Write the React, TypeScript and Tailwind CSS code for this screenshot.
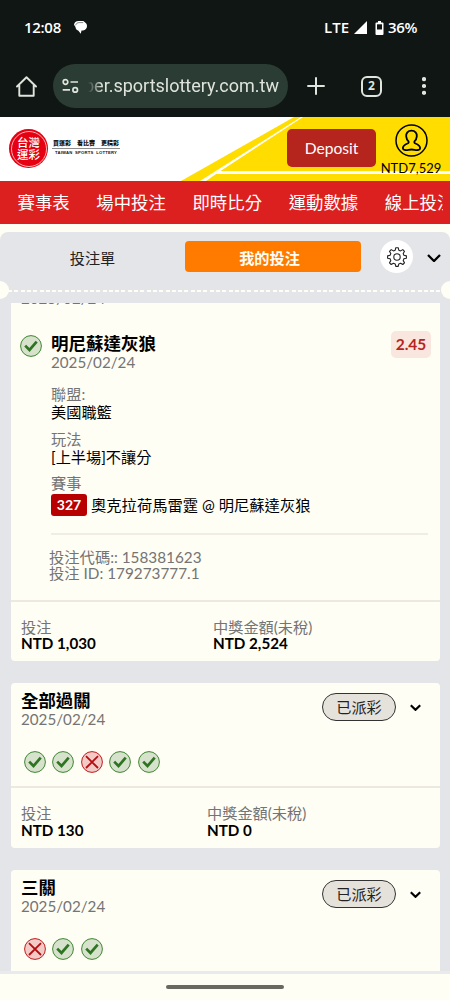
import { ReactNode } from "react";

const navItems = ["賽事表", "場中投注", "即時比分", "運動數據", "線上投注"];

function ResultIcon({ won }: { won: boolean }) {
  return (
    <svg
      className="block h-[22px] w-[22px] shrink-0"
      viewBox="0 0 22 22"
      fill="none"
    >
      <circle
        cx="11"
        cy="11"
        r="10.4"
        fill={won ? "#d6e2cc" : "#f3cbc6"}
        stroke={won ? "#3f8534" : "#bf1a1f"}
      />
      {won ? (
        <path d="M5.2 10.6 9.5 15 16.7 6.7" stroke="#2f7423" strokeWidth="2.7" />
      ) : (
        <path d="M5 5.2 17 17M17 5.2 5 17" stroke="#b80d10" strokeWidth="1.8" />
      )}
    </svg>
  );
}

function Chevron({ big }: { big?: boolean }) {
  return (
    <svg
      className={big ? "h-2 w-[14px]" : "h-[7px] w-[11px]"}
      viewBox="0 0 14 8"
      fill="none"
      stroke="#000"
      strokeWidth={big ? 2.3 : 2.7}
    >
      <path d="M1 1 7 7 13 1" />
    </svg>
  );
}

function StatusBar() {
  return (
    <div className="flex h-[55px] items-center pl-6 pr-8 font-['Open_Sans'] text-[15px] font-semibold text-white">
      <span className="w-[38px] whitespace-nowrap tracking-[-0.3px]">12:08</span>
      <svg className="ml-3 h-[13px] w-[13px]" viewBox="0 0 13 13" fill="#fff">
        <path d="M4.5 0h3.6c1.4 0 2.1.5 2.7 1.2C12.2 1.9 13 3.3 13 5c0 2.4-1.6 4.2-4 4.5H7.5L6.8 12.7 4.2 9.5C2.3 9 1.5 7.4 1.5 6L0 3.8C.2 1.5 2 0 4.5 0Z" />
        <path d="M1.7 4.3C2.2 2.4 3.3 1.6 5.2 1.6h4" fill="none" stroke="#101613" strokeWidth=".5" />
      </svg>
      <span className="ml-auto w-[26px] whitespace-nowrap text-[15px]">LTE</span>
      <svg className="ml-1 h-[13px] w-[13px]" viewBox="0 0 13 13" fill="#fff">
        <path d="M13 0v13H0Z" />
      </svg>
      <svg className="ml-2 h-[14px] w-[9px]" viewBox="0 0 9 14">
        <path
          d="M3 0h3v1.5h1.5Q8.5 1.5 8.5 2.5v10.5q0 1-1 1h-6q-1 0-1-1V2.5q0-1 1-1H3Z"
          fill="#fff"
        />
        <path d="M2 3.3h5v5.2H2Z" fill="#101613" />
      </svg>
      <span className="ml-[4px] w-[30px] whitespace-nowrap tracking-[-0.3px]">36%</span>
    </div>
  );
}

function BrowserBar() {
  return (
    <div className="flex h-[62px] items-start pt-[9px] text-[#dfe4dd]">
      <div className="flex h-11 w-[53px] items-center pl-4">
        <svg
          className="h-[21px] w-[21px]"
          viewBox="0 0 21 21"
          fill="none"
          stroke="currentColor"
          strokeWidth="1.9"
          strokeLinejoin="round"
          strokeLinecap="round"
        >
          <path d="M1 10.5 10.5 1.3 20 10.5M3.3 9v10.8h14.4V9" />
        </svg>
      </div>
      <div className="flex h-11 w-[235px] items-center rounded-full bg-[#2a3c33] pl-[9px]">
        <svg
          className="h-4 w-[17px] shrink-0"
          viewBox="0 0 17 16"
          fill="none"
          stroke="currentColor"
          strokeWidth="1.7"
        >
          <circle cx="3.5" cy="4" r="2.3" />
          <path d="M8.5 4H16M.7 11.9H8" />
          <circle cx="13.2" cy="11.9" r="2.3" />
        </svg>
        <span className="ml-[9px] flex h-8 w-[191px] items-center justify-end overflow-hidden whitespace-nowrap [mask-image:linear-gradient(to_right,transparent,black_14px)] font-['Roboto'] text-[18px] leading-8">
          ber.sportslottery.com.tw
        </span>
      </div>
      <div className="flex h-11 flex-1 items-center">
        <svg
          className="ml-[19px] h-[18px] w-[18px]"
          viewBox="0 0 18 18"
          fill="none"
          stroke="currentColor"
          strokeWidth="2"
        >
          <path d="M9 .3v17.4M.3 9h17.4" />
        </svg>
        <span className="ml-9 flex h-[21px] w-[21px] items-center justify-center rounded-[6px] border-2 border-current font-['Open_Sans'] text-[12px] font-bold">
          2
        </span>
        <svg className="ml-10 h-[18px] w-1" viewBox="0 0 4 18" fill="currentColor">
          <circle cx="2" cy="2.2" r="2.1" />
          <circle cx="2" cy="9" r="2.1" />
          <circle cx="2" cy="15.8" r="2.1" />
        </svg>
      </div>
    </div>
  );
}

function SiteHeader() {
  return (
    <header className="relative h-16 overflow-hidden bg-white">
      <svg className="absolute inset-0 h-16 w-[450px]" viewBox="0 0 450 64">
        <path d="M181 64 294 0H301L200 64Z" fill="#ffdd00" />
        <path d="M220.5 54 303 0H450V54Z" fill="#ffdd00" />
        <path d="M206 64 216 57H450V64Z" fill="#ffdd00" />
      </svg>
      <div className="relative flex h-full">
        <div className="flex items-start pl-[9px] pt-[12px]">
          <div className="flex h-[39px] w-[39px] items-center justify-center rounded-full bg-[#e50012] p-[1.5px]">
            <div className="flex h-full w-full flex-col items-center justify-center rounded-full border border-[#ffb4b4] text-[11.5px] font-medium leading-[11.5px] text-white">
              <span>台灣</span>
              <span>運彩</span>
            </div>
          </div>
          <div className="ml-[4px] mt-[10px] w-[68px] text-center text-[#111]">
            <div className="flex justify-between whitespace-nowrap border-b border-[#8c8c8c] px-[1px] pb-[1px] text-[6px] font-black leading-[8px]">
              <span>買運彩</span>
              <span>看比賽</span>
              <span>更精彩</span>
            </div>
            <div className="flex h-2 items-center justify-center whitespace-nowrap font-['Liberation_Sans'] text-[4.2px] font-bold leading-[8px] tracking-[0.2px]">
              TAIWAN&nbsp; SPORTS&nbsp; LOTTERY
            </div>
          </div>
        </div>
        <button className="ml-auto mt-[12px] h-[38px] w-[89px] rounded-[5px] bg-[#b6251d] pt-px text-[15.6px] text-white">
          Deposit
        </button>
        <div className="flex w-[70px] flex-col items-center pt-[7px]">
          <svg
            className="h-[33px] w-[33px]"
            viewBox="0 0 33 33"
            fill="none"
            stroke="#000"
            strokeWidth="1.5"
          >
            <circle cx="16.5" cy="16.5" r="15.5" />
            <path
              d="M16.5 6.7c-3.7 0-5.6 2.4-5.3 5.6.2 2.2 1.1 3.9 2.3 5 .5 1 .1 1.7-1 2.2-2.5 1-4.3 2.1-4.6 4.3-.1 1.5.8 2.2 2.1 2.2 2.4.3 3.9-.5 6.5-.5s4.1.8 6.5.5c1.3 0 2.2-.7 2.1-2.2-.3-2.2-2.1-3.3-4.6-4.3-1.1-.5-1.5-1.2-1-2.2 1.2-1.1 2.1-2.8 2.3-5 .3-3.2-1.6-5.6-5.3-5.6Z"
              strokeWidth="1.8"
            />
          </svg>
          <span className="mt-[3px] text-[13px] leading-4 text-black">NTD7,529</span>
        </div>
        <div className="w-1" />
      </div>
    </header>
  );
}

function MainNav() {
  return (
    <nav className="h-[43px] overflow-hidden bg-[#dc1f1f] pl-[17.5px] pr-[7px]">
      <div className="flex h-full items-center gap-[26.6px] overflow-hidden whitespace-nowrap pt-px text-[17.4px] text-white">
        {navItems.map((item) => (
          <a key={item} className="shrink-0">
            {item}
          </a>
        ))}
      </div>
    </nav>
  );
}

function SlipTabs() {
  return (
    <div className="h-[58px] rounded-t-[8px] bg-[#e4e5e8] pt-[9px]">
      <div className="flex h-[31px] items-center">
        <button className="h-full w-[185px] pt-[3px] text-[15.2px] text-[#222]">投注單</button>
        <button className="h-full w-44 rounded-[4px] bg-[#ff7b00] pt-[3px] pr-[7px] text-[15.2px] font-bold text-[#fffef5]">
          我的投注
        </button>
        <span className="ml-[19px] flex h-[33px] w-[33px] items-center justify-center rounded-full bg-white">
          <svg
            className="h-5 w-5"
            viewBox="0 0 20 20"
            fill="none"
            stroke="#222"
            strokeWidth="1.1"
            strokeLinejoin="round"
          >
            <path d="M8.8.7h2.4l.6 2.5 1.8.7 2.2-1.3 1.7 1.7-1.3 2.2.7 1.8 2.5.6v2.3l-2.5.6-.7 1.8 1.3 2.2-1.7 1.7-2.2-1.3-1.8.7-.6 2.5H8.8l-.6-2.5-1.8-.7-2.2 1.3-1.7-1.7 1.3-2.2-.7-1.8-2.5-.6V8.9l2.5-.6.7-1.8-1.3-2.2 1.7-1.7 2.2 1.3 1.8-.7Z" />
            <circle cx="10" cy="10" r="3.2" />
          </svg>
        </span>
        <span className="ml-[14px] pt-[2px]">
          <Chevron big />
        </span>
      </div>
    </div>
  );
}

// ticket edge: dashed tear line with a notch on each side
function TearLine() {
  return (
    <div className="relative h-[13px] overflow-visible bg-[#e4e5e8]">
      <div className="mx-2 h-[2px] bg-[repeating-linear-gradient(to_right,#fffef5_0_4px,transparent_4px_6.3px)]" />
      <span className="absolute -left-[9px] -top-[9px] h-[18px] w-[18px] rounded-full bg-[#fffef5]" />
      <span className="absolute -right-[9px] -top-[9px] h-[18px] w-[18px] rounded-full bg-[#fffef5]" />
    </div>
  );
}

function Detail({ label, children }: { label: string; children: ReactNode }) {
  return (
    <div className="h-[44.7px]">
      <div className="h-[18px] leading-[18px] text-[#747474]">{label}</div>
      <div className="flex h-[18px] items-center whitespace-nowrap leading-[18px] text-black">
        {children}
      </div>
    </div>
  );
}

function Totals({ stake, payout, wide }: { stake: string; payout: string; wide?: boolean }) {
  return (
    <div className="flex h-[61px] border-t-2 border-[#ece9e2] pl-[10px] pt-[17px] leading-4">
      <div className={wide ? "w-[192px]" : "w-[186px]"}>
        <div className="h-4 text-[#747474]">投注</div>
        <div className={wide ? "h-4 font-bold text-black" : "h-4 pt-px font-bold text-black"}>
          {stake}
        </div>
      </div>
      <div>
        <div className="h-4 text-[#747474]">中獎金額(未稅)</div>
        <div className={wide ? "h-4 font-bold text-black" : "h-4 pt-px font-bold text-black"}>
          {payout}
        </div>
      </div>
    </div>
  );
}

function OpenBet() {
  return (
    <section className="h-[358px] overflow-hidden rounded-b-[4px] bg-[#fffef5]">
      <div className="-mt-[14px] h-[18px] pl-[10px] leading-[18px] text-[#747474]">2025/02/24</div>
      <div className="mt-[26px] flex h-[50px] pl-[9px] pr-[9px]">
        <div className="pt-[2px]">
          <ResultIcon won />
        </div>
        <div className="ml-[9px]">
          <div className="h-5 text-[17.5px] font-bold leading-[22px] text-black">
            明尼蘇達灰狼
          </div>
          <div className="h-[18px] leading-[18px] text-[#747474]">2025/02/24</div>
        </div>
        <span className="-mt-[2px] ml-auto flex h-[27px] w-10 items-center justify-center rounded-[5px] bg-[#f8e6df] text-[15.5px] font-bold text-[#b6251d]">
          2.45
        </span>
      </div>
      <div className="ml-10 mr-3 mt-[2px] h-[150px] border-b-2 border-[#efede5]">
        <Detail label="聯盟:">美國職籃</Detail>
        <Detail label="玩法">[上半場]不讓分</Detail>
        <Detail label="賽事">
          <span className="relative top-[4px] flex items-center text-[15.3px]">
            <span className="mr-[4px] flex h-[22px] w-9 items-center justify-center rounded-[3px] bg-[#b80000] text-[14px] font-bold text-white">
              327
            </span>
            奧克拉荷馬雷霆 @ 明尼蘇達灰狼
          </span>
        </Detail>
      </div>
      <div className="ml-[38px] h-[65px] pt-[14px] text-[15.3px] leading-4 text-[#747474]">
        <div className="h-4">投注代碼:: 158381623</div>
        <div className="h-4">投注 ID: 179273777.1</div>
      </div>
      <Totals stake="NTD 1,030" payout="NTD 2,524" wide />
    </section>
  );
}

interface BetProps {
  title: string;
  results: boolean[];
  stake?: string;
  payout?: string;
}

function BetCard({ title, results, stake, payout }: BetProps) {
  return (
    <section className="mt-[22px] h-[165px] overflow-hidden rounded-[4px] bg-[#fffef5]">
      <div className="flex h-[68px] pl-[10px] pt-[8px]">
        <div>
          <div className="h-[19px] text-[17.4px] font-bold leading-[20px] text-black">
            {title}
          </div>
          <div className="h-[18px] leading-[18px] text-[#747474]">2025/02/24</div>
        </div>
        <span className="ml-auto mt-[2px] flex h-7 w-[74px] items-center justify-center rounded-full border border-[#333] bg-[#e5e2dc] text-[#222]">
          已派彩
        </span>
        <span className="mr-[19px] ml-[14px] mt-[13px]">
          <Chevron />
        </span>
      </div>
      <div className="flex h-[35px] gap-[6.4px] pl-[13px]">
        {results.map((won, i) => (
          <ResultIcon key={i} won={won} />
        ))}
      </div>
      {stake && payout && <Totals stake={stake} payout={payout} />}
    </section>
  );
}

export default function App() {
  return (
    <div className="flex h-[1000px] w-[450px] flex-col overflow-hidden bg-[#fffef5] font-['Lato','Noto_Sans_CJK_TC',sans-serif] text-[15.2px]">
      <div className="h-[117px] shrink-0 bg-[#101613]">
        <StatusBar />
        <BrowserBar />
      </div>
      <SiteHeader />
      <MainNav />
      <div className="mt-2 shrink-0">
        <SlipTabs />
        <TearLine />
      </div>
      <main className="h-[671px] shrink-0 overflow-hidden border-b-[3px] border-[#e9eaeb] bg-[#e4e5e8] pl-[11px] pr-[10px]">
        <OpenBet />
        <BetCard
          title="全部過關"
          results={[true, true, false, true, true]}
          stake="NTD 130"
          payout="NTD 0"
        />
        <BetCard title="三關" results={[false, true, true]} />
      </main>
      <footer className="flex h-[26px] justify-center pt-[11px]">
        <div className="h-1 w-[118px] rounded-full bg-[#696962]" />
      </footer>
    </div>
  );
}
